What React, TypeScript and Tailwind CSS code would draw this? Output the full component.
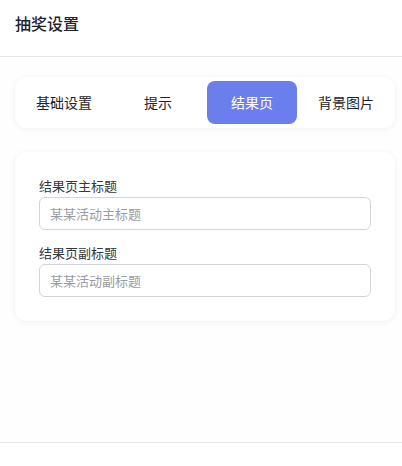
import React, { useState } from 'react';

const tabs = ['基础设置', '提示', '结果页', '背景图片'];

const fields = [
    { label: '结果页主标题', placeholder: '某某活动主标题' },
    { label: '结果页副标题', placeholder: '某某活动副标题' },
];

const App = () => {
    const [active, setActive] = useState(2);

    return (
        <div
            className="h-[466px] overflow-hidden bg-white flex flex-col"
            style={{ fontFamily: '"Noto Sans", "Noto Sans CJK SC", sans-serif' }}
        >
            <header className="h-[57px] shrink-0 flex items-center px-[15px] border-b border-[#e5e6eb]">
                <h1 className="text-base font-medium text-[#1f2329] -mt-[9px]">抽奖设置</h1>
            </header>

            <main className="h-[385px] shrink-0 bg-[#fefefe] pl-[15px] pr-[7px] pt-[20px]">
                <div className="grid grid-cols-4 gap-1 p-1 bg-white rounded-xl shadow-[0_1px_6px_rgba(0,0,0,0.06)]">
                    {tabs.map((tab, i) => (
                        <button
                            key={tab}
                            onClick={() => setActive(i)}
                            className={`h-[43px] rounded-lg text-sm ${
                                i === active ? 'bg-[#6a7fec] text-white' : 'text-[#1f2329]'
                            }`}
                        >
                            {tab}
                        </button>
                    ))}
                </div>

                <div className="mt-[24px] bg-white rounded-xl shadow-[0_1px_6px_rgba(0,0,0,0.06)] p-6 flex flex-col gap-[13px]">
                    {fields.map((f) => (
                        <div key={f.label}>
                            <label className="block text-[13px] leading-5 text-[#33373d] mb-px">{f.label}</label>
                            <input
                                type="text"
                                placeholder={f.placeholder}
                                className="w-full h-[33px] px-[10px] text-[13px] rounded-md border border-[#d4d4d8] outline-none placeholder:text-[#9a9ca3]"
                            />
                        </div>
                    ))}
                </div>
            </main>

            <footer className="flex-1 border-t border-[#e5e6eb] bg-white" />
        </div>
    );
};

export default App;
